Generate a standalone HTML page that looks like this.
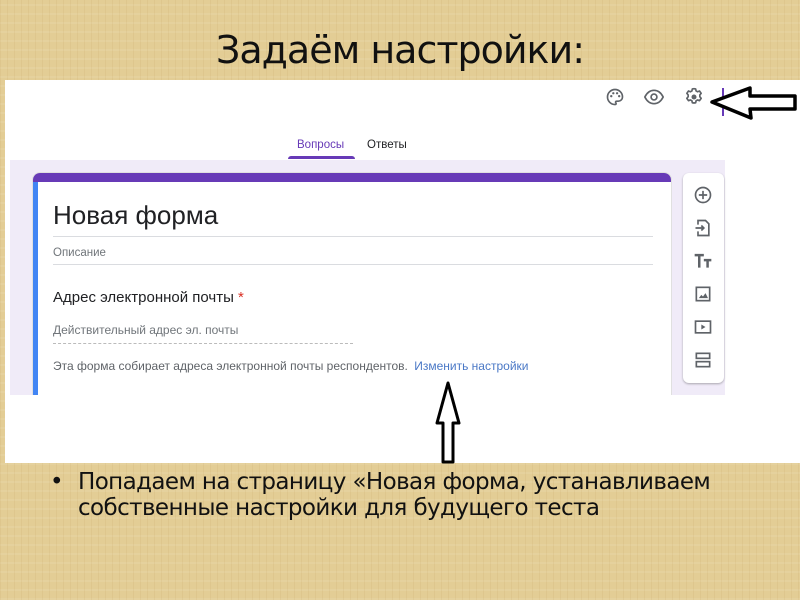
<!DOCTYPE html>
<html><head><meta charset="utf-8">
<style>
*{margin:0;padding:0;box-sizing:border-box}
body{width:800px;height:600px;overflow:hidden;position:relative;
background:#e3cd95;
background-image:repeating-linear-gradient(90deg,rgba(160,120,50,.08) 0 1px,transparent 1px 7px),repeating-linear-gradient(0deg,rgba(255,255,255,.08) 0 2px,transparent 2px 9px);
font-family:"Liberation Sans","Noto Sans CJK JP",sans-serif}
.title{position:absolute;top:28px;left:0;width:800px;text-align:center;font-size:38px;color:#111;font-family:"DejaVu Sans","Liberation Sans",sans-serif;letter-spacing:-1px}
.shot{position:absolute;left:5px;top:80px;width:795px;height:383px;background:#fff}
.tabs{position:absolute;top:59px;left:290px;font-size:11.5px;color:#5f6368}
.tabs span{position:absolute;white-space:nowrap}
.lav{position:absolute;left:5px;top:80px;width:715px;height:235px;background:#f0ebf8}
.card{position:absolute;left:27px;top:92px;width:640px;height:223px;background:#fff;border-radius:8px 8px 0 0;overflow:hidden;border:1px solid #e0e0e0;border-bottom:none}
.card .pb{position:absolute;left:0;top:0;width:100%;height:9px;background:#673ab7}
.card .bb{position:absolute;left:0;top:9px;width:5px;height:100%;background:#4285f4}
.t{position:absolute;left:20px;white-space:nowrap}
.line{position:absolute;left:20px;width:600px;height:1px;background:#dadce0}
.side{position:absolute;left:678px;top:93px;width:41px;height:210px;background:#fff;border-radius:6px;box-shadow:0 1px 2px rgba(0,0,0,.3)}
.side svg{position:absolute;left:10px}
.bul{position:absolute;left:50px;top:469px;font-size:23px;line-height:26px;color:#111;font-family:"DejaVu Sans","Liberation Sans",sans-serif;letter-spacing:-0.6px}
</style></head><body>
<div class="title">Задаём настройки:</div>
<div class="shot">
  <svg style="position:absolute;left:600px;top:7px" width="20" height="20" viewBox="0 0 24 24"><path d="M12 3a9 9 0 0 0 0 18c1.5 0 1.7-1.2 1-2-.6-.7-.4-2 1-2h2a5 5 0 0 0 5-5c0-5-4-9-9-9z" fill="none" stroke="#5f6368" stroke-width="2"/><circle cx="7.5" cy="11" r="1.4" fill="#5f6368"/><circle cx="10" cy="7.5" r="1.4" fill="#5f6368"/><circle cx="14.5" cy="7.5" r="1.4" fill="#5f6368"/><circle cx="17" cy="11" r="1.4" fill="#5f6368"/></svg>
  <svg style="position:absolute;left:639px;top:8px" width="20" height="18" viewBox="0 0 24 20"><path d="M1 10C4 4 8 2 12 2s8 2 11 8c-3 6-7 8-11 8S4 16 1 10z" fill="none" stroke="#5f6368" stroke-width="2"/><circle cx="12" cy="10" r="3.5" fill="none" stroke="#5f6368" stroke-width="2"/></svg>
  <svg style="position:absolute;left:679px;top:7px" width="20" height="20" viewBox="0 0 24 24"><path d="M12 2l2 .3.5 2.4 1.8 1 2.3-.9 2 2.8-1.6 1.9v2.2l1.6 1.9-2 2.8-2.3-.9-1.8 1-.5 2.4-2 .3-2-.3-.5-2.4-1.8-1-2.3.9-2-2.8 1.6-1.9V9.5L3.4 7.6l2-2.8 2.3.9 1.8-1L10 2.3z" fill="none" stroke="#5f6368" stroke-width="2" stroke-linejoin="round"/><circle cx="12" cy="12" r="3" fill="#5f6368"/></svg>
  <div style="position:absolute;left:717px;top:8px;width:2px;height:28px;background:#673ab7"></div>
  <svg style="position:absolute;left:700px;top:5px" width="95" height="36" viewBox="0 0 95 36"><path d="M7 17 L45 3 L45 11 L90 11 L90 24 L45 24 L46 33 Z" fill="#fff" stroke="#000" stroke-width="3.5" stroke-linejoin="round"/></svg>
  <div class="tabs"><span style="left:2px;color:#673ab7">Вопросы</span><span style="left:72px;color:#202124">Ответы</span></div>
  <div style="position:absolute;left:283px;top:76px;width:67px;height:3px;background:#673ab7;border-radius:3px 3px 0 0"></div>
  <div class="lav"></div>
  <div class="card">
    <div class="pb"></div><div class="bb"></div>
    <div class="t" style="top:27px;font-size:26px;color:#202124">Новая форма</div>
    <div class="line" style="top:63px"></div>
    <div class="t" style="top:74px;font-size:11.5px;color:#70757a">Описание</div>
    <div class="line" style="top:91px"></div>
    <div class="t" style="top:116px;font-size:15px;color:#202124">Адрес электронной почты <span style="color:#d93025">*</span></div>
    <div class="t" style="top:150px;font-size:12px;color:#70757a">Действительный адрес эл. почты</div>
    <div style="position:absolute;left:20px;top:170px;width:300px;border-top:1px dashed #bbb"></div>
    <div class="t" style="top:186px;font-size:12px;color:#5f6368">Эта форма собирает адреса электронной почты респондентов. <span style="color:#4a78c6;margin-left:3px">Изменить настройки</span></div>
  </div>
  <div class="side">
    <svg style="top:12px" width="20" height="20" viewBox="0 0 24 24"><circle cx="12" cy="12" r="9" fill="none" stroke="#5f6368" stroke-width="2"/><path d="M12 7v10M7 12h10" stroke="#5f6368" stroke-width="2"/></svg>
    <svg style="top:45px" width="20" height="20" viewBox="0 0 24 24"><path d="M6 8V3h9l4 4v14H6v-5" fill="none" stroke="#5f6368" stroke-width="2"/><path d="M3 12h10M10 9l3 3-3 3" fill="none" stroke="#5f6368" stroke-width="2"/></svg>
    <svg style="top:78px" width="20" height="20" viewBox="0 0 24 24"><path d="M2 5h11M7.5 5v15M13 11h9M17.5 11v9" stroke="#5f6368" stroke-width="3"/></svg>
    <svg style="top:111px" width="20" height="20" viewBox="0 0 24 24"><rect x="4" y="4" width="16" height="16" fill="none" stroke="#5f6368" stroke-width="2"/><path d="M7 17l3-4 2 2 3-4 3 6z" fill="#5f6368"/></svg>
    <svg style="top:144px" width="20" height="20" viewBox="0 0 24 24"><rect x="3" y="5" width="18" height="14" fill="none" stroke="#5f6368" stroke-width="2"/><path d="M10 9v6l5-3z" fill="#5f6368"/></svg>
    <svg style="top:177px" width="20" height="20" viewBox="0 0 24 24"><rect x="4" y="4" width="16" height="6" fill="none" stroke="#5f6368" stroke-width="2"/><rect x="4" y="14" width="16" height="6" fill="none" stroke="#5f6368" stroke-width="2"/></svg>
  </div>
  <svg style="position:absolute;left:428px;top:300px" width="30" height="85" viewBox="0 0 30 85"><path d="M15 3 L26 43 L20 43 L20 82 L10 82 L10 43 L4 43 Z" fill="#fff" stroke="#000" stroke-width="3" stroke-linejoin="round"/></svg>
</div>
<div class="bul"><span style="position:absolute;left:0;top:0">•</span><div style="margin-left:28px">Попадаем на страницу «Новая форма, устанавливаем<br>собственные настройки для будущего теста</div></div>
</body></html>
